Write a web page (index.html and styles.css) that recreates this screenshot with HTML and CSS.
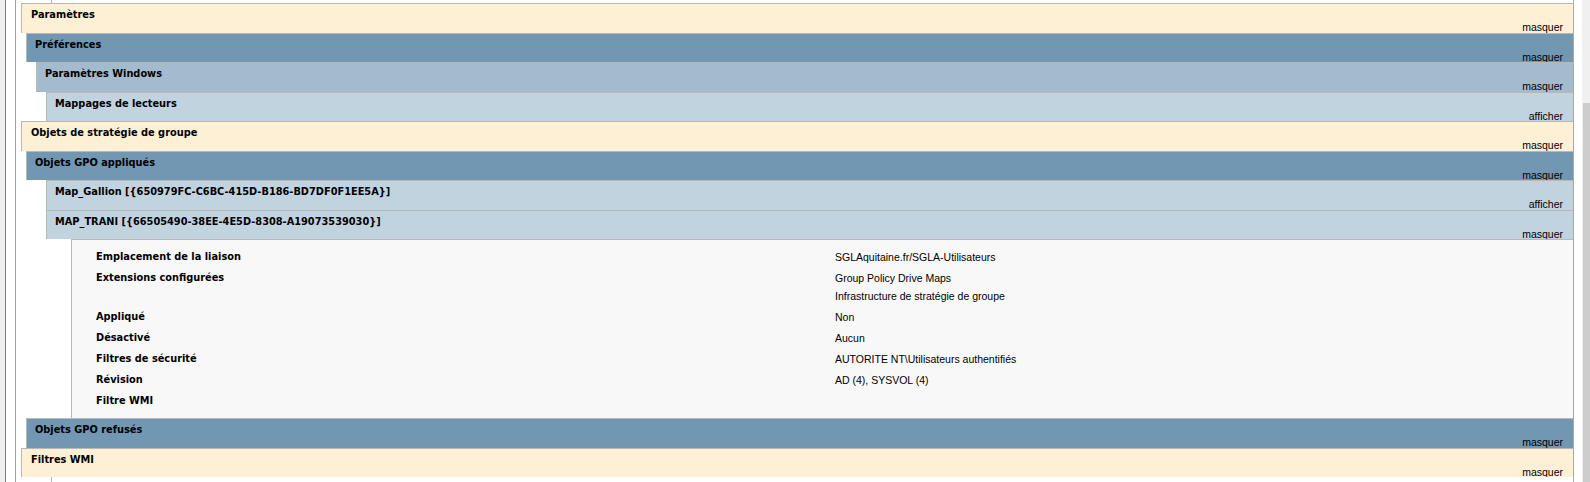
FILE: index.html
```html
<!DOCTYPE html>
<html lang="fr">
<head>
    <meta charset="UTF-8">
    <title>Résultats de la stratégie de groupe</title>
    <link rel="stylesheet" href="styles.css">
</head>
<body>
    <div class="window">
        <div class="edge"></div>
        <div class="pane">
            <div class="report">
                <div class="stub top"></div>

                <div class="sec he0"><span class="title">Paramètres</span><a href="#" class="expando">masquer</a></div>
                <div class="sec he1"><span class="title">Préférences</span><a href="#" class="expando">masquer</a></div>
                <div class="sec he2"><span class="title">Paramètres Windows</span><a href="#" class="expando">masquer</a></div>
                <div class="sec he3"><span class="title">Mappages de lecteurs</span><a href="#" class="expando">afficher</a></div>

                <div class="sec he0"><span class="title">Objets de stratégie de groupe</span><a href="#" class="expando">masquer</a></div>
                <div class="sec he1"><span class="title">Objets GPO appliqués</span><a href="#" class="expando">masquer</a></div>
                <div class="sec he3"><span class="title">Map_Gallion [{650979FC-C6BC-415D-B186-BD7DF0F1EE5A}]</span><a href="#" class="expando">afficher</a></div>
                <div class="sec he3"><span class="title">MAP_TRANI [{66505490-38EE-4E5D-8308-A19073539030}]</span><a href="#" class="expando">masquer</a></div>

                <div class="info">
                    <div class="label">Emplacement de la liaison</div>
                    <div class="value">SGLAquitaine.fr/SGLA-Utilisateurs</div>

                    <div class="label">Extensions configurées</div>
                    <div class="value">Group Policy Drive Maps<br>Infrastructure de stratégie de groupe</div>

                    <div class="label">Appliqué</div>
                    <div class="value">Non</div>

                    <div class="label">Désactivé</div>
                    <div class="value">Aucun</div>

                    <div class="label">Filtres de sécurité</div>
                    <div class="value">AUTORITE NT\Utilisateurs authentifiés</div>

                    <div class="label">Révision</div>
                    <div class="value">AD (4), SYSVOL (4)</div>

                    <div class="label">Filtre WMI</div>
                    <div class="value"></div>
                </div>

                <div class="sec he1"><span class="title">Objets GPO refusés</span><a href="#" class="expando">masquer</a></div>
                <div class="sec he0"><span class="title">Filtres WMI</span><a href="#" class="expando">masquer</a></div>

                <div class="stub bottom"></div>
            </div>
        </div>
        <div class="gap"></div>
        <div class="scrollbar"><div class="thumb"></div></div>
    </div>
</body>
</html>
```

FILE: styles.css
```css
* {
    margin: 0;
    padding: 0;
    box-sizing: border-box;
}

body {
    background: #ffffff;
    overflow: hidden;
    font-family: 'Liberation Sans', Arial, sans-serif;
    color: #000;
}

.window {
    display: flex;
    width: 1590px;
    height: 482px;
}

.edge {
    width: 5px;
    background: #f0f0f0;
}

.pane {
    flex: 1;
    border-left: 1px solid #7a7a7a;
    padding-left: 9px;
}

.report {
    height: 100%;
    border-left: 1px solid #a0a0a0;
    padding-left: 5px;
    display: flex;
    flex-direction: column;
}

.stub {
    margin-left: 30px;
    border-left: 1px solid #b4b4b4;
    border-right: 1px solid #a8a8a8;
    background: #fff;
}

.stub.top {
    height: 3px;
}

.stub.bottom {
    flex: 1;
}

.sec {
    display: flex;
    flex-direction: column;
    height: 29.5px;
    padding: 4px 10px 0 8px;
    border-top: 1px solid #b8b8b8;
    border-left: 1px solid #b8b8b8;
    border-right: 1px solid #a8a8a8;
    overflow: hidden;
}

.title {
    font-family: 'DejaVu Sans', Verdana, sans-serif;
    font-weight: bold;
    font-size: 9.8px;
    line-height: 14px;
    white-space: nowrap;
}

.expando {
    font-size: 10.5px;
    line-height: 10.5px;
    text-align: right;
    text-decoration: none;
    color: #000;
}

.he0 {
    background: #fef0d5;
    padding-left: 9px;
}

.he1 {
    margin-left: 5px;
    background: #7197b3;
}

.he2 {
    margin-left: 15px;
    background: #a4bacd;
}

.he3 {
    margin-left: 25px;
    background: #c1d3df;
}

.info {
    margin-left: 50px;
    border-top: 1px solid #b8b8b8;
    border-left: 1px solid #b8b8b8;
    border-right: 1px solid #a8a8a8;
    background: #f8f8f8;
    padding: 6px 0 7px 24px;
    display: grid;
    grid-template-columns: 739px 1fr;
}

.label,
.value {
    padding: 1.5px 0;
    line-height: 18px;
}

.label {
    font-family: 'DejaVu Sans', Verdana, sans-serif;
    font-weight: bold;
    font-size: 9.8px;
}

.value {
    font-size: 10.5px;
}

.gap {
    width: 8px;
    background: #fff;
}

.scrollbar {
    width: 8px;
    background: #f0f0f0;
    padding-top: 103px;
    padding-left: 1px;
}

.thumb {
    height: 100%;
    background: #cdcdcd;
}
```
